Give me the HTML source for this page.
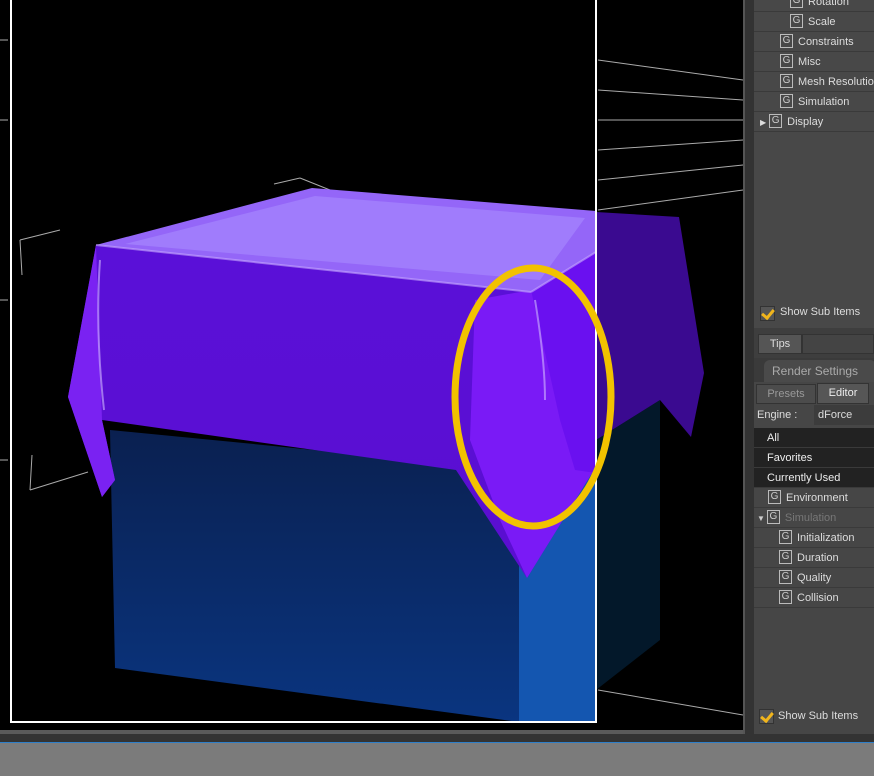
<!DOCTYPE html>
<html><head><meta charset="utf-8"><style>
*{margin:0;padding:0;box-sizing:border-box}
body{width:874px;height:776px;overflow:hidden;background:#7b7b7b;position:relative;font-family:"Liberation Sans",sans-serif;font-size:11px;color:#ddd}
.abs{position:absolute}
.row{position:absolute;height:20px;line-height:20px;left:0;right:0;border-bottom:1px solid #3a3a3a}
.g{display:inline-block;width:13px;height:14px;border:1px solid #bbb;font-size:10px;line-height:12px;text-align:center;color:#ccc;vertical-align:middle;margin-right:5px;margin-top:-2px}
.cb{position:absolute;width:15px;height:15px;background:#555;border:1px solid #333}
.cb:after{content:"";position:absolute;left:3px;top:0px;width:5px;height:9px;border-right:3px solid #f1b51c;border-bottom:3px solid #f1b51c;transform:rotate(40deg)}
</style></head><body>
<div class="abs" style="left:0;top:0;width:743px;height:730px;background:#000"></div>
<svg class="abs" style="left:0;top:0" width="743" height="730">
<defs>
<linearGradient id="fr" x1="0" y1="0" x2="0" y2="1"><stop offset="0" stop-color="#0a2050"/><stop offset="1" stop-color="#0a3580"/></linearGradient>
<linearGradient id="cl" x1="0" y1="0" x2="0" y2="1"><stop offset="0" stop-color="#5a10d8"/><stop offset="1" stop-color="#5a0ed0"/></linearGradient>
</defs>
<g stroke="#aaa" stroke-width="1" fill="none">
<path d="M20 240 L60 230 M20 240 L22 275 M30 490 L88 472 M30 490 L32 455 M300 178 L330 190 M274 184 L300 178 M598 60 L743 80 M598 90 L743 100 M598 120 L743 120 M598 150 L743 140 M598 180 L743 165 M598 210 L743 190 M475 583 L553 597 L580 572 M553 597 L553 560 M0 40 L8 40 M0 120 L8 120 M0 300 L8 300 M0 460 L8 460 M598 690 L743 715"/>
</g>
<polygon points="110,430 519,470 519,722 115,668" fill="url(#fr)"/>
<polygon points="519,470 596,440 596,722 519,722" fill="#1456b0"/>
<polygon points="596,440 660,400 660,640 596,690" fill="#03182a"/>
<polygon points="596,212 679,217 704,373 691,437 660,400 596,440" fill="#3a0a90"/>
<polygon points="96,245 531,290 596,250 596,473 592,473 527,578 456,470 102,420 115,480 102,497 68,397" fill="url(#cl)"/>
<polygon points="96,245 102,420 115,480 102,497 68,397" fill="#7a22f2"/>
<polygon points="475,300 531,290 560,300 596,360 596,473 592,473 527,578 500,520 470,440" fill="#7a1af6"/>
<polygon points="531,290 596,250 596,473 575,470 560,420" fill="#6a10f0"/>
<polygon points="96,245 312,188 596,211 596,252 531,292" fill="#9466f8"/>
<polygon points="125,244 315,196 585,218 540,280" fill="#a07cfc"/>
<path d="M96 245 L531 292 M531 292 L596 252" stroke="#c6a8ff" stroke-width="2" fill="none" opacity=".6"/>
<path d="M535 300 Q545 360 545 400 M100 260 Q95 330 104 410" stroke="#d0b8ff" stroke-width="2" fill="none" opacity=".6"/>
<rect x="11" y="-2" width="585" height="724" fill="none" stroke="#fff" stroke-width="2"/>
<ellipse cx="533" cy="397" rx="78" ry="129" fill="none" stroke="#f2c200" stroke-width="7"/>
</svg>
<div class="abs" style="left:0;top:730px;width:743px;height:4px;background:#5a5a5a"></div>
<div class="abs" style="left:0;top:734px;width:874px;height:9px;background:#333"></div>
<div class="abs" style="left:0;top:742px;width:874px;height:1px;background:#2f7fc8"></div>
<div class="abs" style="left:743px;top:0;width:11px;height:734px;background:#333;border-left:2px solid #555"></div>
<div class="abs" style="left:754px;top:0;width:120px;height:328px;background:#484848">
<div class="row" style="top:-8px;padding-left:36px"><span class="g">G</span>Rotation</div>
<div class="row" style="top:12px;padding-left:36px"><span class="g">G</span>Scale</div>
<div class="row" style="top:32px;padding-left:26px"><span class="g">G</span>Constraints</div>
<div class="row" style="top:52px;padding-left:26px"><span class="g">G</span>Misc</div>
<div class="row" style="top:72px;padding-left:26px;white-space:nowrap"><span class="g">G</span>Mesh Resolution</div>
<div class="row" style="top:92px;padding-left:26px"><span class="g">G</span>Simulation</div>
<div class="row" style="top:112px;padding-left:6px"><span style="font-size:8px;margin-right:3px">▶</span><span class="g">G</span>Display</div>
<div class="cb" style="left:6px;top:306px"></div><div class="abs" style="left:26px;top:306px">Show Sub Items</div>
</div>
<div class="abs" style="left:754px;top:328px;width:120px;height:30px;background:#3e3e3e">
<div class="abs" style="left:4px;top:6px;width:44px;height:20px;background:#555;border:1px solid #333;text-align:center;line-height:18px">Tips</div>
<div class="abs" style="left:48px;top:6px;width:72px;height:20px;background:#444;border:1px solid #333"></div>
</div>
<div class="abs" style="left:754px;top:358px;width:120px;height:24px;background:#3a3a3a">
<div class="abs" style="left:10px;top:2px;width:112px;height:22px;background:#4a4a4a;border-radius:6px 6px 0 0;color:#aaa;font-size:12px;line-height:22px;padding-left:8px">Render Settings</div>
</div>
<div class="abs" style="left:754px;top:382px;width:120px;height:352px;background:#464646">
<div class="abs" style="left:2px;top:2px;width:60px;height:20px;background:#4c4c4c;border:1px solid #333;color:#999;text-align:center;line-height:18px">Presets</div>
<div class="abs" style="left:63px;top:1px;width:52px;height:21px;background:#565656;border:1px solid #333;color:#eee;text-align:center;line-height:19px">Editor</div>
<div class="abs" style="left:3px;top:24px;line-height:18px">Engine :</div>
<div class="abs" style="left:60px;top:23px;width:60px;height:20px;background:#3c3c3c;padding-left:4px;line-height:20px">dForce</div>
<div class="row" style="top:46px;background:#222;padding-left:13px;color:#eee">All</div>
<div class="row" style="top:66px;background:#222;padding-left:13px;color:#eee">Favorites</div>
<div class="row" style="top:86px;background:#222;padding-left:13px;color:#eee">Currently Used</div>
<div class="row" style="top:106px;padding-left:14px"><span class="g">G</span>Environment</div>
<div class="row" style="top:126px;padding-left:3px;color:#777"><span style="font-size:8px;margin-right:2px;color:#ccc">▼</span><span class="g">G</span>Simulation</div>
<div class="row" style="top:146px;padding-left:25px"><span class="g">G</span>Initialization</div>
<div class="row" style="top:166px;padding-left:25px"><span class="g">G</span>Duration</div>
<div class="row" style="top:186px;padding-left:25px"><span class="g">G</span>Quality</div>
<div class="row" style="top:206px;padding-left:25px"><span class="g">G</span>Collision</div>
<div class="cb" style="left:5px;top:327px"></div><div class="abs" style="left:24px;top:328px">Show Sub Items</div>
</div>
</body></html>
